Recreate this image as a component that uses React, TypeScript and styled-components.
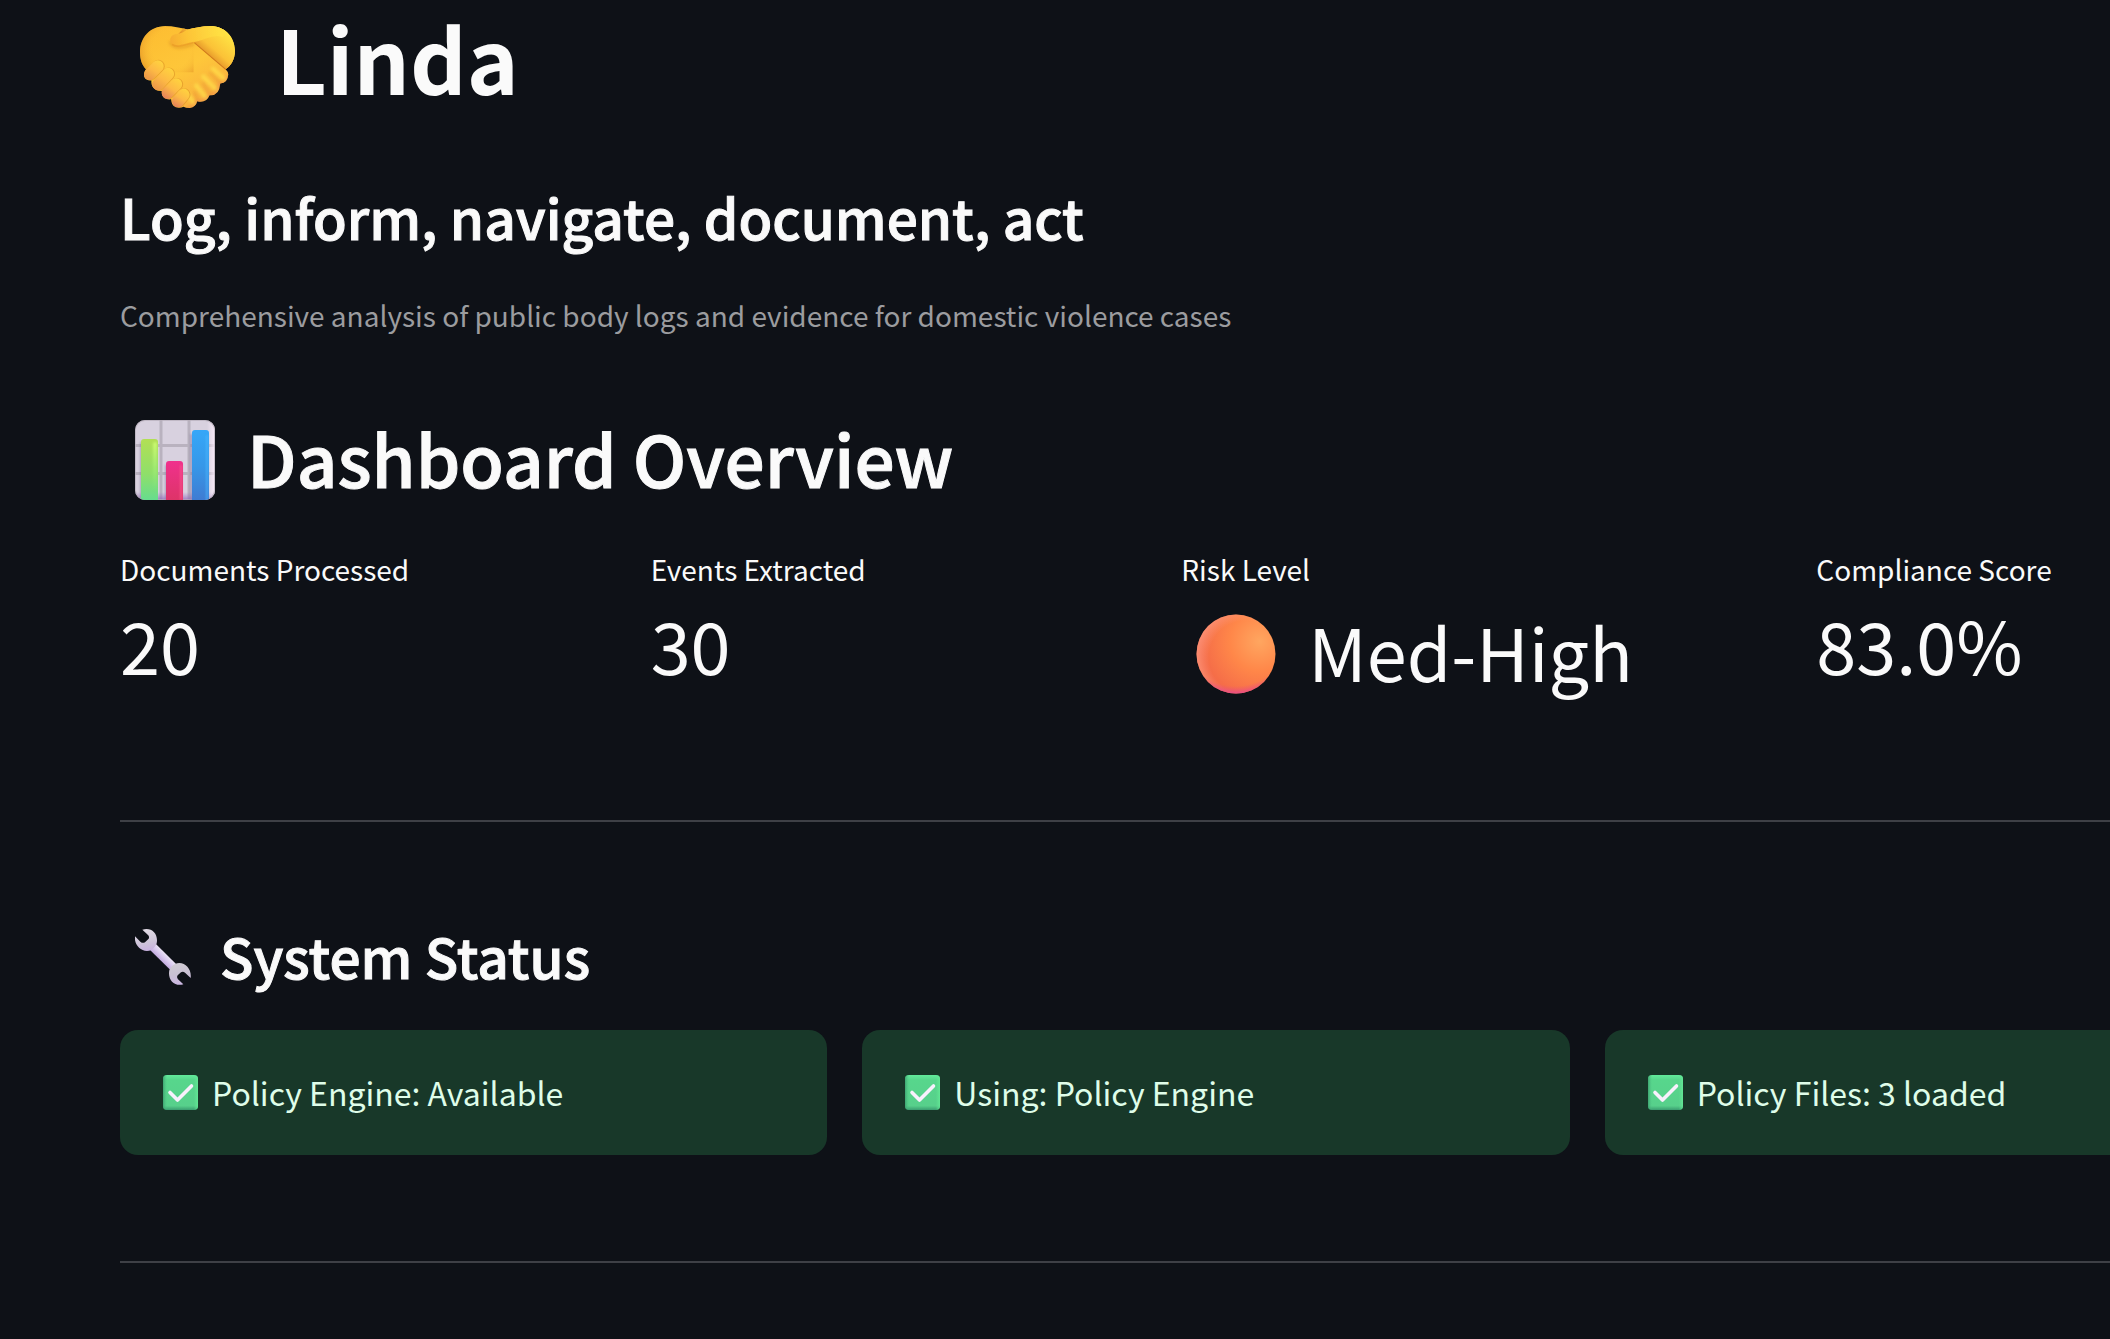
import React from "react";
import styled, { createGlobalStyle } from "styled-components";

const GlobalStyle = createGlobalStyle`
  *, *::before, *::after { box-sizing: border-box; }
  body {
    margin: 0;
    background: #0e1117;
    color: #fafafa;
    font-family: "Noto Sans CJK JP", "Noto Sans", sans-serif;
  }
  h1, h2, h3, p, dl, dd, ul { margin: 0; padding: 0; }
`;

const Viewport = styled.div`
  min-height: 100vh;
  overflow: hidden;
  background: #0e1117;
`;

/* The dashboard is wider than its window; the right side scrolls out of view. */
const Main = styled.main`
  width: calc(100% + 322px);
  padding: 0 120px 76px;
`;

const Title = styled.h1`
  display: flex;
  align-items: center;
  gap: 41px;
  padding-left: 20px;
  font-size: 88px;
  line-height: 114px;
  font-weight: 700;
`;

const Subtitle = styled.h3`
  margin-top: 66px;
  font-size: 55px;
  line-height: 72px;
  font-weight: 500;
  -webkit-text-stroke: 1px currentColor;
`;

const Caption = styled.p`
  margin-top: 39px;
  font-size: 28px;
  line-height: 48px;
  color: #9b9c9f;
`;

const SectionTitle = styled.h2`
  display: flex;
  align-items: center;
  gap: 32px;
  margin-top: 70px;
  padding-left: 15px;
  font-size: 71px;
  line-height: 96px;
  font-weight: 500;
  -webkit-text-stroke: 1px currentColor;
`;

const StatusTitle = styled.h3`
  display: flex;
  align-items: center;
  gap: 29px;
  padding-left: 15px;
  font-size: 55px;
  line-height: 72px;
  font-weight: 500;
  -webkit-text-stroke: 1px currentColor;
`;

const Metrics = styled.dl`
  display: grid;
  grid-template-columns: 1fr 1fr 600px 1fr;
  gap: 35px;
  margin-top: 40px;
`;

const MetricLabel = styled.dt`
  font-size: 28px;
  line-height: 48px;
`;

const MetricValue = styled.dd<{ $withIcon?: boolean }>`
  display: flex;
  align-items: center;
  gap: 32px;
  margin-top: 3px;
  padding-left: ${(p) => (p.$withIcon ? "15px" : "0")};
  font-size: 72px;
  line-height: ${(p) => (p.$withIcon ? "110px" : "96px")};
`;

const Divider = styled.hr<{ $top: number; $bottom: number }>`
  height: 2px;
  margin: ${(p) => p.$top}px 0 ${(p) => p.$bottom}px;
  border: 0;
  background: #3e4046;
`;

const StatusList = styled.ul`
  display: grid;
  grid-template-columns: repeat(3, 1fr);
  gap: 35px;
  margin-top: 39px;
  list-style: none;
`;

const StatusCard = styled.li`
  display: flex;
  align-items: center;
  gap: 14px;
  padding: 38px 43px 39px;
  border-radius: 18px;
  background: #183829;
  color: #dffde9;
  font-size: 32px;
  line-height: 48px;
`;

const Icon = styled.svg`
  flex: none;
  display: block;
`;

const FINGERS = [
  [143, 197, 119, 221],
  [174, 220, 144, 252],
  [198, 251, 172, 277],
  [220, 282, 204, 302],
];

function Handshake() {
  return (
    <Icon width="95" height="102" viewBox="90 17 284 305" aria-hidden="true">
      <defs>
        <linearGradient id="hsBase" x1="130" y1="80" x2="270" y2="320" gradientUnits="userSpaceOnUse">
          <stop offset="0" stopColor="#fdbd31" />
          <stop offset="0.55" stopColor="#fec73a" />
          <stop offset="1" stopColor="#f8ae3f" />
        </linearGradient>
        <radialGradient id="hsLeft" cx="185" cy="145" r="105" gradientUnits="userSpaceOnUse">
          <stop offset="0.5" stopColor="#ffc43a" stopOpacity="0" />
          <stop offset="1" stopColor="#de8b22" stopOpacity="0.75" />
        </radialGradient>
        <linearGradient id="hsRight" x1="345" y1="90" x2="280" y2="165" gradientUnits="userSpaceOnUse">
          <stop offset="0" stopColor="#ffe544" />
          <stop offset="0.65" stopColor="#fbc237" />
          <stop offset="1" stopColor="#df8a26" />
        </linearGradient>
        <linearGradient id="hsThumb" x1="182" y1="125" x2="330" y2="90" gradientUnits="userSpaceOnUse">
          <stop offset="0" stopColor="#f6ad30" />
          <stop offset="0.35" stopColor="#fdc436" />
          <stop offset="1" stopColor="#ffe043" />
        </linearGradient>
        <clipPath id="hsClip">
          <path d="M233 87C210 83 190 77 165 77C120 78 90 112 90 155C90 178 97 194 108 206C96 222 102 241 124 240C122 260 135 272 155 271C153 288 165 298 183 296C184 314 193 321 207 321Q215 321 220 318Q226 322 239 322Q257 319 261 302Q287 309 298 284Q326 287 330 249Q352 247 354 222Q353 212 346 206C363 195 374 176 374 150C372 105 340 77 300 77C275 77 255 83 233 87Z" />
        </clipPath>
        <filter id="hsBlur" filterUnits="userSpaceOnUse" x="60" y="50" width="340" height="300">
          <feGaussianBlur stdDeviation="5" />
        </filter>
        <filter id="hsSoft" filterUnits="userSpaceOnUse" x="60" y="50" width="340" height="300">
          <feGaussianBlur stdDeviation="2" />
        </filter>
        {FINGERS.map(([x1, y1, x2, y2], i) => (
          <linearGradient key={i} id={`hsF${i}`} x1={x1 + 10} y1={y1 - 14} x2={x2 - 6} y2={y2 + 18} gradientUnits="userSpaceOnUse">
            <stop offset="0" stopColor="#ffd23f" />
            <stop offset="0.5" stopColor="#fdb945" />
            <stop offset="1" stopColor={i > 1 ? "#e5805a" : "#e99448"} />
          </linearGradient>
        ))}
      </defs>
      <g clipPath="url(#hsClip)">
        <rect x="90" y="77" width="284" height="245" fill="url(#hsBase)" />
        <path d="M90 77H250V215H90Z" fill="url(#hsLeft)" />
        <path d="M180 122C184 146 214 144 252 130" fill="none" stroke="#d98a20" strokeWidth="7" opacity="0.6" filter="url(#hsBlur)" />
        <path d="M252 127L347 208L380 190V70H233L205 100Z" fill="url(#hsRight)" />
        <path d="M253 127L347 207" stroke="#cf7a1c" strokeWidth="3" filter="url(#hsSoft)" />
        <path d="M200 137C175 138 173 103 199 101C222 99 224 87 250 83L350 75L338 110C310 100 288 118 252 125C235 130 216 137 200 137Z" fill="url(#hsThumb)" filter="url(#hsSoft)" />
        <path d="M186 132C198 143 222 134 250 126" fill="none" stroke="#e99b27" strokeWidth="5" opacity="0.7" filter="url(#hsSoft)" />
        <path d="M308 205L344 237M279 228L322 271M258 255L290 294M235 285L252 309" fill="none" stroke="#ffe04b" strokeWidth="14" strokeLinecap="round" opacity="0.7" filter="url(#hsBlur)" />
        <path d="M354 225Q350 245 330 248Q326 275 299 284Q285 304 260 302Q252 320 230 322" fill="none" stroke="#ee8a4f" strokeWidth="8" opacity="0.6" filter="url(#hsBlur)" />
        <path d="M298 215L330 248M277 246L299 281M252 273L264 301" fill="none" stroke="#e2882f" strokeWidth="5" opacity="0.55" filter="url(#hsBlur)" />
        {FINGERS.map(([x1, y1, x2, y2], i) => (
          <React.Fragment key={i}>
            <path d={`M${x1 + 2} ${y1}L${x2 + 2} ${y2}`} stroke="#d0801f" strokeWidth="38" strokeLinecap="round" opacity="0.45" filter="url(#hsSoft)" />
            <path d={`M${x1} ${y1}L${x2} ${y2}`} stroke={`url(#hsF${i})`} strokeWidth="36" strokeLinecap="round" />
          </React.Fragment>
        ))}
      </g>
    </Icon>
  );
}

function BarChart() {
  return (
    <Icon width="80" height="86" viewBox="0 -6 80 86" aria-hidden="true">
      <defs>
        <linearGradient id="bcGreen" x1="0" y1="0" x2="0" y2="1">
          <stop offset="0" stopColor="#b2df55" />
          <stop offset="0.55" stopColor="#8fdf6a" />
          <stop offset="1" stopColor="#62dc92" />
        </linearGradient>
        <linearGradient id="bcGlow" x1="0" y1="0" x2="0" y2="1">
          <stop offset="0" stopColor="#cdfa70" />
          <stop offset="1" stopColor="#8cf08a" stopOpacity="0" />
        </linearGradient>
        <linearGradient id="bcPink" x1="0" y1="0" x2="0" y2="1">
          <stop offset="0" stopColor="#f0318d" />
          <stop offset="1" stopColor="#dc3465" />
        </linearGradient>
        <linearGradient id="bcBlue" x1="0" y1="0" x2="0" y2="1">
          <stop offset="0" stopColor="#36a7f8" />
          <stop offset="0.5" stopColor="#3797e8" />
          <stop offset="1" stopColor="#4079d0" />
        </linearGradient>
        <linearGradient id="bcPurple" x1="0" y1="0" x2="0" y2="1">
          <stop offset="0" stopColor="#9a72c4" stopOpacity="0" />
          <stop offset="1" stopColor="#8a61b8" stopOpacity="0.75" />
        </linearGradient>
        <linearGradient id="bcEdge" x1="0" y1="0" x2="1" y2="0">
          <stop offset="0" stopColor="#fff0ff" stopOpacity="0" />
          <stop offset="1" stopColor="#fdeffd" stopOpacity="0.85" />
        </linearGradient>
        <clipPath id="bcClip">
          <rect width="80" height="80" rx="10" />
        </clipPath>
        <filter id="bcBlur" filterUnits="userSpaceOnUse" x="-10" y="-10" width="100" height="100">
          <feGaussianBlur stdDeviation="1" />
        </filter>
      </defs>
      <g clipPath="url(#bcClip)">
        <rect width="80" height="80" fill="#d8d1df" />
        <path d="M26 0V80M54 0V80M0 25.500H80M0 53.500H80" stroke="#b9b2bf" strokeWidth="3" />
        <rect y="72" width="80" height="8" fill="url(#bcPurple)" />
        <rect x="72" width="8" height="80" fill="url(#bcEdge)" />
        <rect width="80" height="80" rx="10" fill="none" stroke="#b7aeb9" strokeWidth="2" opacity="0.7" />
        <path d="M7 22V80M32 45V80M57 14V80" stroke="#8577a0" strokeWidth="4" opacity="0.5" filter="url(#bcBlur)" />
        <rect x="6" y="19" width="17" height="64" rx="3" fill="url(#bcGreen)" />
        <rect x="18" y="22" width="4" height="50" rx="2" fill="url(#bcGlow)" filter="url(#bcBlur)" />
        <rect x="31" y="41" width="17" height="42" rx="3" fill="url(#bcPink)" />
        <path d="M46 45V80" stroke="#ff5e91" strokeWidth="2" opacity="0.6" filter="url(#bcBlur)" />
        <rect x="57" y="10" width="17" height="73" rx="3" fill="url(#bcBlue)" />
        <path d="M72 15V80" stroke="#4ab9ff" strokeWidth="2" opacity="0.7" filter="url(#bcBlur)" />
      </g>
    </Icon>
  );
}

function OrangeCircle() {
  return (
    <Icon width="80" height="86" viewBox="0 -6 80 86" aria-hidden="true">
      <defs>
        <radialGradient id="ocMain" cx="0.8" cy="0.34" r="0.75">
          <stop offset="0" stopColor="#ffa660" />
          <stop offset="0.5" stopColor="#ff8749" />
          <stop offset="1" stopColor="#f46b48" />
        </radialGradient>
        <radialGradient id="ocBottom" cx="0.5" cy="0.2" r="0.8">
          <stop offset="0.88" stopColor="#ee5472" stopOpacity="0" />
          <stop offset="1" stopColor="#e94d87" />
        </radialGradient>
        <radialGradient id="ocLeft" cx="0.62" cy="0.54" r="0.64">
          <stop offset="0.72" stopColor="#ff9e86" stopOpacity="0" />
          <stop offset="1" stopColor="#ff9e86" stopOpacity="0.75" />
        </radialGradient>
      </defs>
      <circle cx="40" cy="40" r="39.500" fill="url(#ocMain)" />
      <circle cx="40" cy="40" r="39.500" fill="url(#ocLeft)" />
      <circle cx="40" cy="40" r="39.500" fill="url(#ocBottom)" />
    </Icon>
  );
}

function Wrench() {
  return (
    <Icon width="56" height="60" viewBox="75 72 168 180" aria-hidden="true">
      <defs>
        <linearGradient id="wrHandle" x1="168" y1="160" x2="150" y2="178" gradientUnits="userSpaceOnUse">
          <stop offset="0" stopColor="#eae2f4" />
          <stop offset="0.45" stopColor="#d9c9ef" />
          <stop offset="1" stopColor="#c0a8dc" />
        </linearGradient>
        <linearGradient id="wrTop" x1="105" y1="84" x2="115" y2="150" gradientUnits="userSpaceOnUse">
          <stop offset="0" stopColor="#e2dce6" />
          <stop offset="0.6" stopColor="#cfc5da" />
          <stop offset="1" stopColor="#c8b1e0" />
        </linearGradient>
        <linearGradient id="wrBottom" x1="205" y1="186" x2="212" y2="252" gradientUnits="userSpaceOnUse">
          <stop offset="0" stopColor="#cfcbd3" />
          <stop offset="0.5" stopColor="#c9c1d3" />
          <stop offset="1" stopColor="#cdb7e4" />
        </linearGradient>
      </defs>
      <path d="M134 125L202 193L185 211L117 144Z" fill="url(#wrHandle)" />
      <path d="M97 86C125 77 146 99 140 127Q138 136 124 147C98 158 71 134 75 106L91 122Q98 128 105 124L116 113Q119 107 114 102Z" fill="url(#wrTop)" />
      <path d="M220 250C193 258 172 235 178 208Q182 196 195 189C221 178 246 202 242 231L226 216Q219 210 213 214L203 223Q199 229 204 235Z" fill="url(#wrBottom)" />
    </Icon>
  );
}

function CheckMark() {
  return (
    <Icon width="35" height="35" viewBox="0 0 35 35" aria-hidden="true">
      <defs>
        <linearGradient id="cmFill" x1="0" y1="0" x2="0" y2="1">
          <stop offset="0" stopColor="#62eb9b" />
          <stop offset="0.14" stopColor="#57d68c" />
          <stop offset="0.88" stopColor="#57d08b" />
          <stop offset="1" stopColor="#3a9c70" />
        </linearGradient>
        <linearGradient id="cmSide" x1="0" y1="0" x2="1" y2="0">
          <stop offset="0" stopColor="#37976a" stopOpacity="0.8" />
          <stop offset="0.12" stopColor="#4fc485" stopOpacity="0" />
          <stop offset="0.88" stopColor="#60e794" stopOpacity="0" />
          <stop offset="1" stopColor="#65ec97" stopOpacity="0.8" />
        </linearGradient>
      </defs>
      <rect width="35" height="35" rx="4" fill="url(#cmFill)" />
      <rect width="35" height="35" rx="4" fill="url(#cmSide)" />
      <path d="M7 17.500L14.500 25L28.500 11" fill="none" stroke="#f8f0fd" strokeWidth="3.600" strokeLinecap="round" strokeLinejoin="round" />
    </Icon>
  );
}

const METRICS = [
  { label: "Documents Processed", value: "20" },
  { label: "Events Extracted", value: "30" },
  { label: "Risk Level", value: "Med-High", icon: true },
  { label: "Compliance Score", value: "83.0%" },
];

const STATUSES = ["Policy Engine: Available", "Using: Policy Engine", "Policy Files: 3 loaded"];

export default function App() {
  return (
    <>
      <GlobalStyle />
      <Viewport>
        <Main>
          <Title>
            <Handshake />
            Linda
          </Title>
          <Subtitle>Log, inform, navigate, document, act</Subtitle>
          <Caption>Comprehensive analysis of public body logs and evidence for domestic violence cases</Caption>

          <SectionTitle>
            <BarChart />
            Dashboard Overview
          </SectionTitle>
          <Metrics>
            {METRICS.map((m) => (
              <div key={m.label}>
                <MetricLabel>{m.label}</MetricLabel>
                <MetricValue $withIcon={m.icon}>
                  {m.icon && <OrangeCircle />}
                  {m.value}
                </MetricValue>
              </div>
            ))}
          </Metrics>

          <Divider $top={114} $bottom={97} />

          <StatusTitle>
            <Wrench />
            System Status
          </StatusTitle>
          <StatusList>
            {STATUSES.map((s) => (
              <StatusCard key={s}>
                <CheckMark />
                {s}
              </StatusCard>
            ))}
          </StatusList>

          <Divider $top={106} $bottom={0} />
        </Main>
      </Viewport>
    </>
  );
}
